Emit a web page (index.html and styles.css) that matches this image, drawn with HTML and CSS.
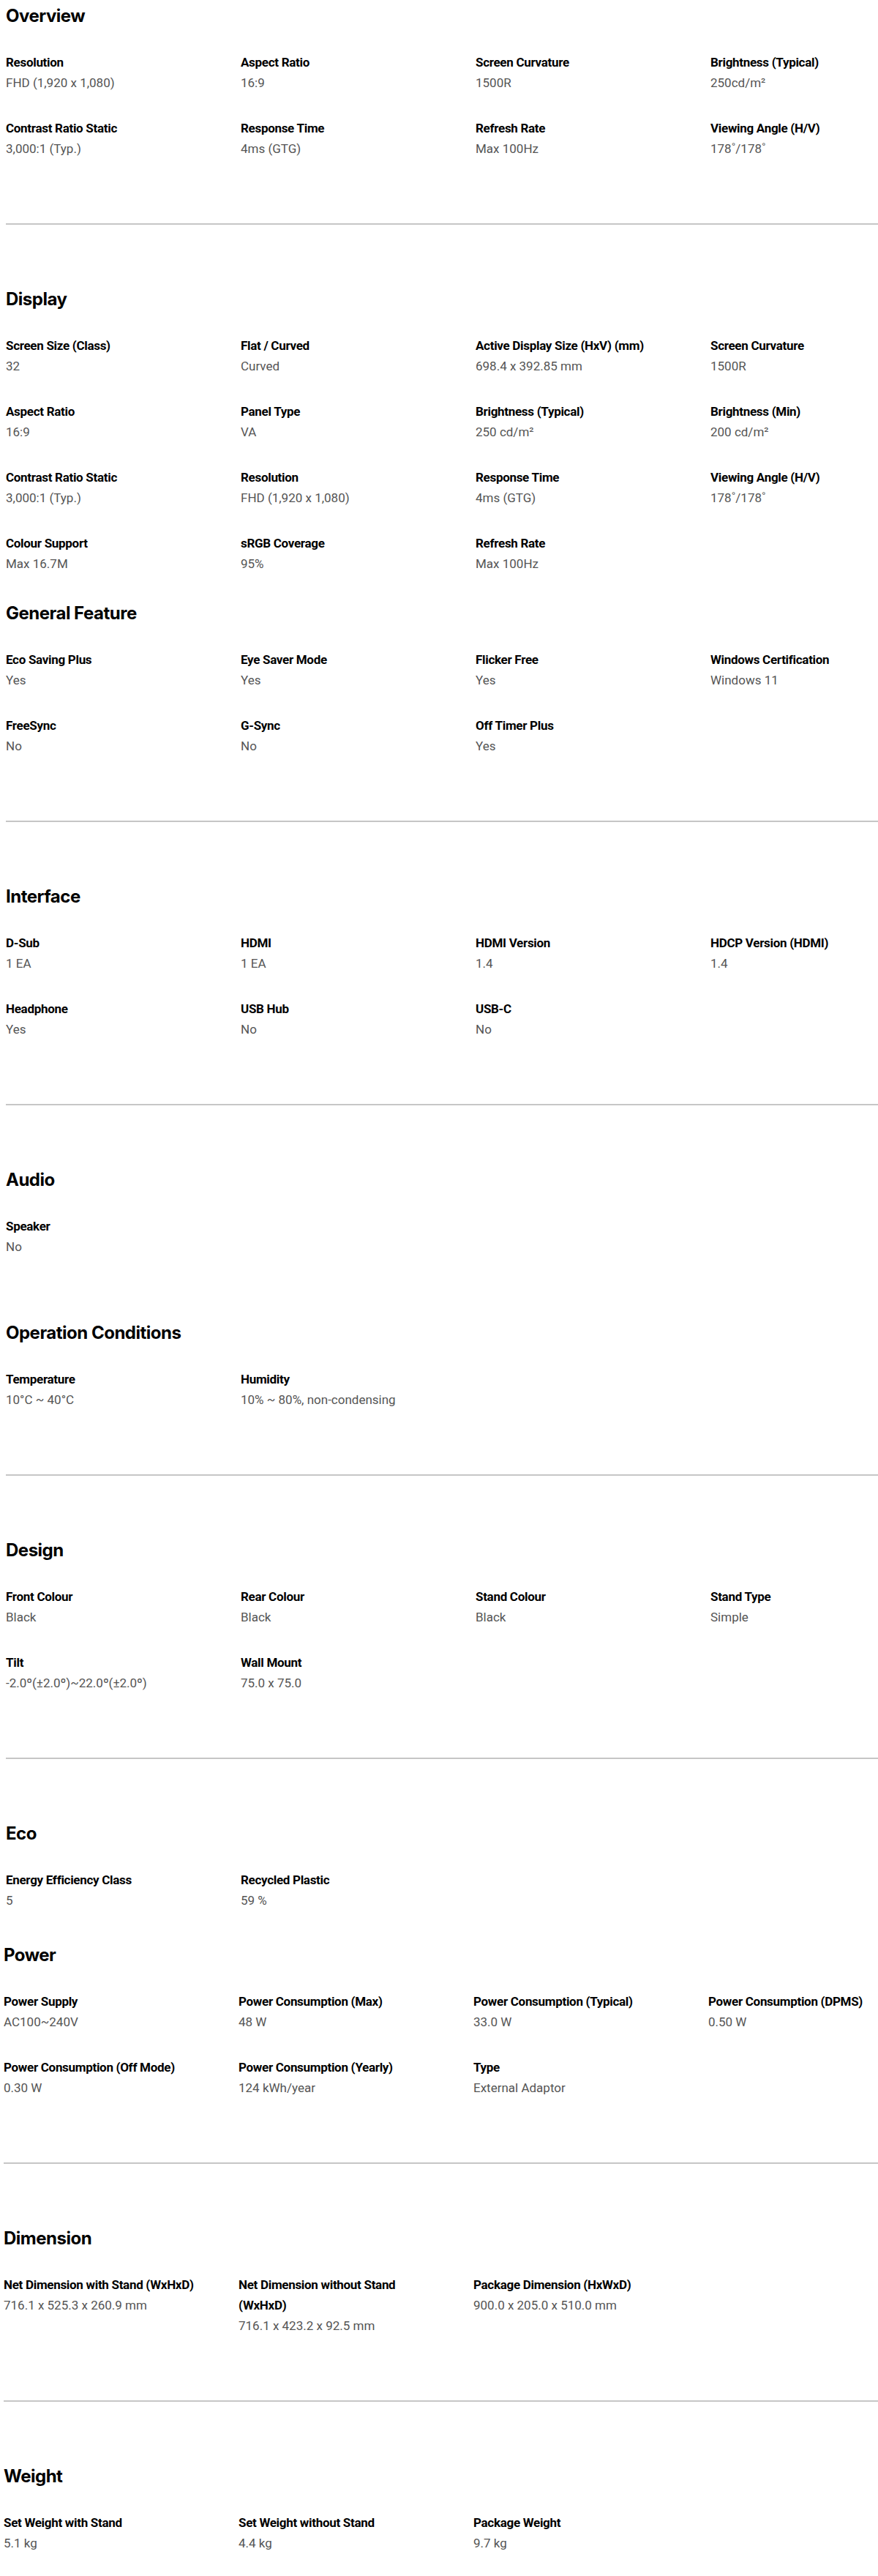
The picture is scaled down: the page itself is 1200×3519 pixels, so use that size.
FILE: index.html
```html
<!DOCTYPE html>
<html lang="en">
<head>
    <meta charset="UTF-8">
    <meta name="viewport" content="width=device-width, initial-scale=1.0">
    <title>Specifications</title>
    <link rel="stylesheet" href="styles.css">
</head>
<body>
    <main class="specs">
        <section class="spec-group">
            <h2>Overview</h2>
            <dl class="spec-grid">
                <div class="spec"><dt>Resolution</dt><dd>FHD (1,920 x 1,080)</dd></div>
                <div class="spec"><dt>Aspect Ratio</dt><dd>16:9</dd></div>
                <div class="spec"><dt>Screen Curvature</dt><dd>1500R</dd></div>
                <div class="spec"><dt>Brightness (Typical)</dt><dd>250cd/m²</dd></div>
                <div class="spec"><dt>Contrast Ratio Static</dt><dd>3,000:1 (Typ.)</dd></div>
                <div class="spec"><dt>Response Time</dt><dd>4ms (GTG)</dd></div>
                <div class="spec"><dt>Refresh Rate</dt><dd>Max 100Hz</dd></div>
                <div class="spec"><dt>Viewing Angle (H/V)</dt><dd>178˚/178˚</dd></div>
            </dl>
        </section>
        <hr class="divider">

        <section class="spec-group tight">
            <h2>Display</h2>
            <dl class="spec-grid">
                <div class="spec"><dt>Screen Size (Class)</dt><dd>32</dd></div>
                <div class="spec"><dt>Flat / Curved</dt><dd>Curved</dd></div>
                <div class="spec"><dt>Active Display Size (HxV) (mm)</dt><dd>698.4 x 392.85 mm</dd></div>
                <div class="spec"><dt>Screen Curvature</dt><dd>1500R</dd></div>
                <div class="spec"><dt>Aspect Ratio</dt><dd>16:9</dd></div>
                <div class="spec"><dt>Panel Type</dt><dd>VA</dd></div>
                <div class="spec"><dt>Brightness (Typical)</dt><dd>250 cd/m²</dd></div>
                <div class="spec"><dt>Brightness (Min)</dt><dd>200 cd/m²</dd></div>
                <div class="spec"><dt>Contrast Ratio Static</dt><dd>3,000:1 (Typ.)</dd></div>
                <div class="spec"><dt>Resolution</dt><dd>FHD (1,920 x 1,080)</dd></div>
                <div class="spec"><dt>Response Time</dt><dd>4ms (GTG)</dd></div>
                <div class="spec"><dt>Viewing Angle (H/V)</dt><dd>178˚/178˚</dd></div>
                <div class="spec"><dt>Colour Support</dt><dd>Max 16.7M</dd></div>
                <div class="spec"><dt>sRGB Coverage</dt><dd>95%</dd></div>
                <div class="spec"><dt>Refresh Rate</dt><dd>Max 100Hz</dd></div>
            </dl>
        </section>

        <section class="spec-group">
            <h2>General Feature</h2>
            <dl class="spec-grid">
                <div class="spec"><dt>Eco Saving Plus</dt><dd>Yes</dd></div>
                <div class="spec"><dt>Eye Saver Mode</dt><dd>Yes</dd></div>
                <div class="spec"><dt>Flicker Free</dt><dd>Yes</dd></div>
                <div class="spec"><dt>Windows Certification</dt><dd>Windows 11</dd></div>
                <div class="spec"><dt>FreeSync</dt><dd>No</dd></div>
                <div class="spec"><dt>G-Sync</dt><dd>No</dd></div>
                <div class="spec"><dt>Off Timer Plus</dt><dd>Yes</dd></div>
            </dl>
        </section>
        <hr class="divider">

        <section class="spec-group">
            <h2>Interface</h2>
            <dl class="spec-grid">
                <div class="spec"><dt>D-Sub</dt><dd>1 EA</dd></div>
                <div class="spec"><dt>HDMI</dt><dd>1 EA</dd></div>
                <div class="spec"><dt>HDMI Version</dt><dd>1.4</dd></div>
                <div class="spec"><dt>HDCP Version (HDMI)</dt><dd>1.4</dd></div>
                <div class="spec"><dt>Headphone</dt><dd>Yes</dd></div>
                <div class="spec"><dt>USB Hub</dt><dd>No</dd></div>
                <div class="spec"><dt>USB-C</dt><dd>No</dd></div>
            </dl>
        </section>
        <hr class="divider">

        <section class="spec-group">
            <h2>Audio</h2>
            <dl class="spec-grid">
                <div class="spec"><dt>Speaker</dt><dd>No</dd></div>
            </dl>
        </section>

        <section class="spec-group">
            <h2>Operation Conditions</h2>
            <dl class="spec-grid">
                <div class="spec"><dt>Temperature</dt><dd>10°C ~ 40°C</dd></div>
                <div class="spec"><dt>Humidity</dt><dd>10% ~ 80%, non-condensing</dd></div>
            </dl>
        </section>
        <hr class="divider">

        <section class="spec-group">
            <h2>Design</h2>
            <dl class="spec-grid">
                <div class="spec"><dt>Front Colour</dt><dd>Black</dd></div>
                <div class="spec"><dt>Rear Colour</dt><dd>Black</dd></div>
                <div class="spec"><dt>Stand Colour</dt><dd>Black</dd></div>
                <div class="spec"><dt>Stand Type</dt><dd>Simple</dd></div>
                <div class="spec"><dt>Tilt</dt><dd>-2.0º(±2.0º)~22.0º(±2.0º)</dd></div>
                <div class="spec"><dt>Wall Mount</dt><dd>75.0 x 75.0</dd></div>
            </dl>
        </section>
        <hr class="divider">

        <section class="spec-group eco">
            <h2>Eco</h2>
            <dl class="spec-grid">
                <div class="spec"><dt>Energy Efficiency Class</dt><dd>5</dd></div>
                <div class="spec"><dt>Recycled Plastic</dt><dd>59 %</dd></div>
            </dl>
        </section>

        <div class="shifted">
            <section class="spec-group">
                <h2>Power</h2>
                <dl class="spec-grid">
                    <div class="spec"><dt>Power Supply</dt><dd>AC100~240V</dd></div>
                    <div class="spec"><dt>Power Consumption (Max)</dt><dd>48 W</dd></div>
                    <div class="spec"><dt>Power Consumption (Typical)</dt><dd>33.0 W</dd></div>
                    <div class="spec"><dt>Power Consumption (DPMS)</dt><dd>0.50 W</dd></div>
                    <div class="spec"><dt>Power Consumption (Off Mode)</dt><dd>0.30 W</dd></div>
                    <div class="spec"><dt>Power Consumption (Yearly)</dt><dd>124 kWh/year</dd></div>
                    <div class="spec"><dt>Type</dt><dd>External Adaptor</dd></div>
                </dl>
            </section>
            <hr class="divider">

            <section class="spec-group">
                <h2>Dimension</h2>
                <dl class="spec-grid">
                    <div class="spec"><dt>Net Dimension with Stand (WxHxD)</dt><dd>716.1 x 525.3 x 260.9 mm</dd></div>
                    <div class="spec"><dt>Net Dimension without Stand (WxHxD)</dt><dd>716.1 x 423.2 x 92.5 mm</dd></div>
                    <div class="spec"><dt>Package Dimension (HxWxD)</dt><dd>900.0 x 205.0 x 510.0 mm</dd></div>
                </dl>
            </section>
            <hr class="divider">

            <section class="spec-group last">
                <h2>Weight</h2>
                <dl class="spec-grid">
                    <div class="spec"><dt>Set Weight with Stand</dt><dd>5.1 kg</dd></div>
                    <div class="spec"><dt>Set Weight without Stand</dt><dd>4.4 kg</dd></div>
                    <div class="spec"><dt>Package Weight</dt><dd>9.7 kg</dd></div>
                </dl>
            </section>
        </div>
    </main>
</body>
</html>
```

FILE: styles.css
```css
body {
    font-family: Roboto, 'Noto Sans', Arial, sans-serif;
    background: #ffffff;
    color: #000000;
    margin: 0;
    padding: 6px 0 0 8px;
}

.spec-group {
    margin-bottom: 88px;
}

.spec-group.tight {
    margin-bottom: 38px;
}

.spec-group.eco {
    margin-bottom: 45px;
}

.spec-group.last {
    margin-bottom: 28px;
}

h2 {
    font-family: Inter, 'Noto Sans', sans-serif;
    font-size: 24px;
    font-weight: 700;
    line-height: 32px;
    letter-spacing: -0.5px;
    margin: 0 0 33px;
}

.spec-grid {
    display: grid;
    grid-template-columns: repeat(3, 273px) minmax(0, 1fr);
    column-gap: 48px;
    row-gap: 34px;
    margin: 0;
}

.spec {
    font-size: 17px;
    line-height: 28px;
}

.spec dt {
    font-weight: 700;
    color: #000000;
    letter-spacing: -0.3px;
}

.spec dd {
    margin: 0;
    color: #555555;
}

.divider {
    border: none;
    height: 2px;
    background: #c6c6c6;
    margin: 0 0 86px;
}

.shifted {
    margin-left: -3px;
}
```
